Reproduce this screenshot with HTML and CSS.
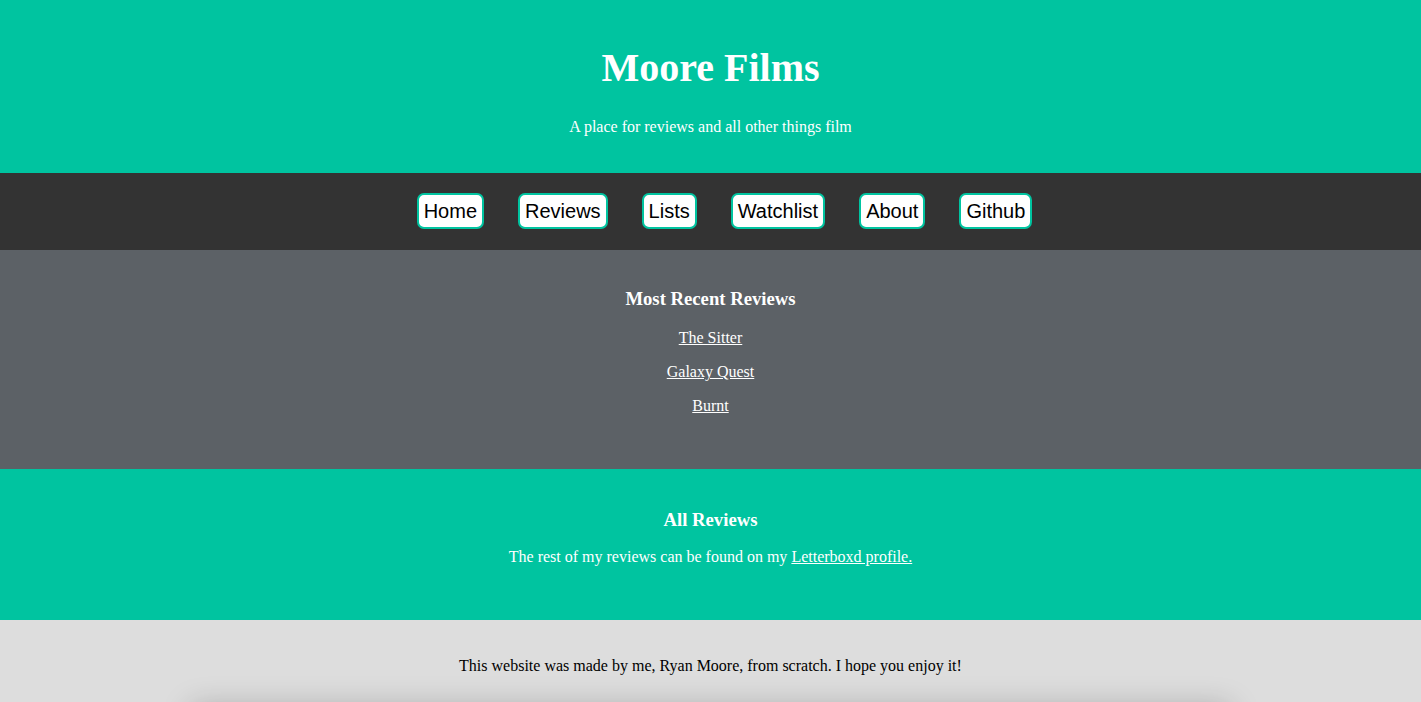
FILE: index.html
```html
<!DOCTYPE html>
<html>
<head>
<meta charset="utf-8">
<link rel="stylesheet" href="styles.css">
</head>
<body>
<header class="hero">
  <h1 class="hero-title">Moore Films</h1>
  <p class="hero-sub">A place for reviews and all other things film</p>
</header>
<nav class="nav">
  <a class="nav-btn" href="#">Home</a>
  <a class="nav-btn" href="#">Reviews</a>
  <a class="nav-btn" href="#">Lists</a>
  <a class="nav-btn" href="#">Watchlist</a>
  <a class="nav-btn" href="#">About</a>
  <a class="nav-btn" href="#">Github</a>
</nav>
<section class="recent">
  <h3 class="sec-title">Most Recent Reviews</h3>
  <a class="review-link" href="#">The Sitter</a>
  <a class="review-link" href="#">Galaxy Quest</a>
  <a class="review-link" href="#">Burnt</a>
</section>
<section class="all">
  <h3 class="sec-title">All Reviews</h3>
  <p class="all-text">The rest of my reviews can be found on my <a class="inline-link" href="#">Letterboxd profile.</a></p>
</section>
<footer class="footer">
  <p class="footer-text">This website was made by me, Ryan Moore, from scratch. I hope you enjoy it!</p>
  <div class="card"></div>
</footer>
</body>
</html>
```

FILE: styles.css
```css
body {
  margin: 0;
  font-family: "Liberation Serif", "Times New Roman", serif;
  background: #dddddd;
}
.hero {
  background: #00c4a0;
  color: #fff;
  text-align: center;
  padding: 45px 0 37px;
}
.hero-title {
  margin: 0;
  font-size: 40px;
  line-height: 46px;
  font-weight: bold;
}
.hero-sub {
  margin: 27px 0 0;
  font-size: 16px;
  line-height: 18px;
}
.nav {
  background: #333333;
  display: flex;
  justify-content: center;
  gap: 34px;
  padding: 20px 0 21px 28px;
}
.nav-btn {
  display: block;
  background: #fff;
  color: #000;
  text-decoration: none;
  font-family: "Liberation Sans", Arial, sans-serif;
  font-size: 20px;
  line-height: 22px;
  padding: 5px 5px;
  border: 2px solid #00c4a0;
  border-radius: 7px;
}
.recent {
  background: #5c6166;
  color: #fff;
  display: flex;
  flex-direction: column;
  align-items: center;
  padding: 38px 0 54px;
}
.sec-title {
  margin: 0;
  font-size: 18.7px;
  line-height: 22px;
  font-weight: bold;
}
.review-link {
  color: #fff;
  font-size: 16px;
  line-height: 18px;
  margin-top: 16px;
}
.recent .review-link:first-of-type {
  margin-top: 19px;
}
.all {
  background: #00c4a0;
  color: #fff;
  text-align: center;
  padding: 40px 0 54px;
}
.all-text {
  margin: 17px 0 0;
  font-size: 16px;
  line-height: 18px;
}
.inline-link {
  color: #fff;
}
.footer {
  background: #dddddd;
  padding: 37px 0 0;
  text-align: center;
  display: flex;
  flex-direction: column;
  align-items: center;
}
.footer-text {
  margin: 0;
  font-size: 16px;
  line-height: 18px;
  color: #000;
}
.card {
  margin-top: 35px;
  width: 1040px;
  height: 300px;
  background: #dddddd;
  box-shadow: 0 -4px 28px rgba(0, 0, 0, 0.22);
}
```
